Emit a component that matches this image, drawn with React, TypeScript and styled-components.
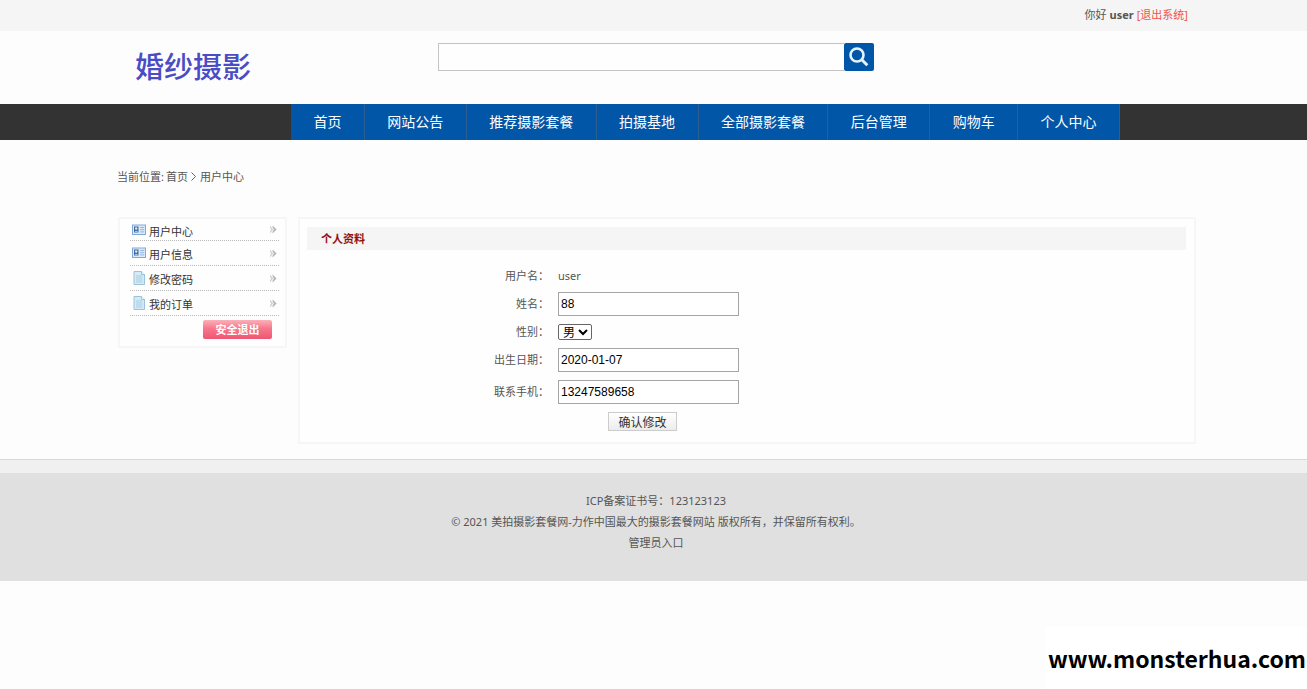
import React from "react";
import styled, { createGlobalStyle } from "styled-components";

const GlobalStyle = createGlobalStyle`
  * { box-sizing: border-box; }
  body {
    margin: 0;
    background: #fdfdfd;
    color: #555;
    font: 11px/21px "Noto Sans", "Noto Sans CJK SC", sans-serif;
  }
  a { color: inherit; text-decoration: none; }
  ul { list-style: none; margin: 0; padding: 0; }
`;

const Page = styled.div`
  display: flex;
  flex-direction: column;
  min-height: 100vh;
`;

const TopBar = styled.div`
  display: flex;
  justify-content: flex-end;
  gap: 3px;
  height: 31px;
  padding: 0 119px 0 0;
  line-height: 30px;
  background: #f5f5f5;
`;

const LogoutLink = styled.a`
  color: #f0524f;
`;

const Header = styled.header`
  display: flex;
  align-items: flex-start;
  height: 73px;
  padding: 12px 111px 0 135px;
`;

const Logo = styled.a`
  flex: 0 0 303px;
  color: #4a4cc6;
  font: 500 29px/44px "Noto Sans CJK SC", sans-serif;
`;

const SearchForm = styled.form`
  display: flex;
  flex: 0 1 436px;
`;

const SearchInput = styled.input`
  flex: 1;
  min-width: 0;
  height: 28px;
  padding: 0 6px;
  border: 1px solid #c4c4c4;
  border-right: 0;
  background: #fefefe;
  font: 12px "Liberation Sans", sans-serif;
`;

const SearchButton = styled.button`
  display: flex;
  align-items: center;
  justify-content: center;
  width: 30px;
  height: 28px;
  padding: 0;
  border: 0;
  border-radius: 2px;
  background: #0256a8;
`;

const Nav = styled.nav`
  padding: 0 187px 0 291px;
  background: #333;
`;

const NavList = styled.ul`
  display: flex;
  max-width: 829px;
`;

const NavItem = styled.li`
  flex: 1 0 auto;
  border-right: 1px solid #2c5f90;
  background: #0256a8;
`;

const NavLink = styled.a`
  display: block;
  height: 36px;
  padding: 0 21px;
  color: #fff;
  text-align: center;
  font: 14px/34px "Noto Sans CJK SC", sans-serif;
`;

const Breadcrumb = styled.div`
  display: flex;
  align-items: center;
  gap: 2px;
  padding: 26px 111px 30px 117px;
`;

const Columns = styled.div`
  display: flex;
  align-items: flex-start;
  gap: 11px;
  padding: 0 111px 15px 118px;
`;

const Sidebar = styled.aside`
  flex: 0 0 169px;
  padding: 0 6px 7px 10px;
  border: 2px solid #f6f6f6;
  background: #fefefe;
`;

const MenuItem = styled.li`
  height: 25px;
  border-bottom: 1px dotted #bbb;
  &:first-child { height: 22px; }
`;

const MenuLink = styled.a`
  display: flex;
  align-items: center;
  gap: 3px;
  height: 100%;
  padding: 0 1px 0 2px;
  color: #333;
`;

const MenuLabel = styled.span`
  flex: 1;
  padding-top: 3px;
`;

const ExitButton = styled.button`
  display: block;
  width: 69px;
  height: 19px;
  margin: 4px 7px 0 auto;
  padding: 0;
  border: 0;
  border-radius: 2px;
  background: linear-gradient(#fbb0ba, #f7768c 45%, #ee5672);
  color: #fff;
  font: bold 11px/19px "Noto Sans CJK SC", sans-serif;
`;

const Panel = styled.main`
  flex: 1;
  padding: 8px 8px 11px 7px;
  border: 2px solid #f6f6f6;
  background: #fefefe;
`;

const PanelTitle = styled.h1`
  height: 23px;
  margin: 0 0 12px;
  padding: 0 14px;
  background: #f5f5f5;
  color: #901010;
  font: bold 11px/22px "Noto Sans CJK SC", sans-serif;
`;

const Row = styled.div<{ $tall?: boolean }>`
  display: grid;
  grid-template-columns: 242px 181px;
  gap: 9px;
  align-items: center;
  height: ${(p) => (p.$tall ? 36 : 28)}px;
`;

const FieldText = styled.span`
  padding-bottom: 2px;
`;

const FieldLabel = styled.label`
  padding-bottom: 2px;
  text-align: right;
`;

const TextInput = styled.input`
  width: 100%;
  height: 24px;
  padding: 0 2px;
  border: 1px solid #a5a5a5;
  background: #fff;
  color: #000;
  font: 12px "Liberation Sans", sans-serif;
`;

const Select = styled.select`
  width: 34px;
  height: 16px;
  padding: 0;
  border: 1px solid #666;
  border-radius: 2px;
  background: #fff;
  color: #000;
  font: 12px/14px "Liberation Sans", "Noto Sans CJK SC", sans-serif;
`;

const SubmitButton = styled.button`
  display: block;
  width: 69px;
  height: 19px;
  margin: 2px 0 0 301px;
  padding: 0;
  border: 1px solid #ccc;
  background: linear-gradient(#fff, #ececec);
  color: #333;
  font: 12px/17px "Noto Sans CJK SC", sans-serif;
`;

const Footer = styled.footer`
  height: 122px;
  padding: 17px 0 0 5px;
  border-top: 1px solid #d8d8d8;
  background: linear-gradient(#f0f0f0 13px, #e0e0e0 13px);
  text-align: center;
`;

const FooterLine = styled.p`
  margin: 0;
  &:first-child { margin-top: 13px; }
`;

const Watermark = styled.div`
  align-self: flex-end;
  margin-top: auto;
  padding: 0 1px 0 3px;
  background: #fff;
  color: #000;
  font: bold 23px/62px "Noto Sans CJK SC", sans-serif;
`;

const navItems = ["首页", "网站公告", "推荐摄影套餐", "拍摄基地", "全部摄影套餐", "后台管理", "购物车", "个人中心"];

const menuItems = [
  { label: "用户中心", icon: "card" },
  { label: "用户信息", icon: "card" },
  { label: "修改密码", icon: "page" },
  { label: "我的订单", icon: "page" },
];

const SearchIcon = () => (
  <svg width="22" height="22" viewBox="0 0 22 22" fill="none" stroke="#e4f4ff">
    <circle cx="9" cy="9" r="6.5" strokeWidth="2.6" />
    <path d="M13.8 13.8 19.3 19.3" strokeWidth="3" />
  </svg>
);

const CardIcon = () => (
  <svg width="14" height="12" viewBox="0 0 14 12">
    <rect x=".5" y="1" width="13" height="9.5" fill="#dcebf9" stroke="#7fa9d8" />
    <rect x="2" y="2.5" width="4.5" height="6" fill="#3b659c" />
    <circle cx="4.2" cy="4.5" r="1.3" fill="#f6dfc4" />
    <path d="M2.5 8.3c.3-2 3.2-2 3.6 0z" fill="#9ec9f0" />
    <path d="M8.2 3.5h4M8.2 5.7h4M8.2 7.9h4" stroke="#8fb5de" />
  </svg>
);

const PageIcon = () => (
  <svg width="14" height="14" viewBox="0 0 14 14">
    <path d="M2 .5h7.5L12.5 3.5v10H2z" fill="#d4ebf7" stroke="#9cc2d8" />
    <path d="M9.5.5v3h3" fill="#fff" stroke="#9cc2d8" />
    <path d="M4 5h6.5M4 7h6.5M4 9h6.5M4 11h6.5" stroke="#a6cfe4" />
  </svg>
);

const ArrowIcon = () => (
  <svg width="9" height="9" viewBox="0 0 9 9">
    <path d="M1 .5 4.2 4.500 1 8.500V6.500L2.200 4.500 1 2.500z" fill="#d0d0d0" />
    <path d="M3.600.5 7.600 4.500 3.600 8.500V6.500L5 4.500 3.600 2.500z" fill="#b5b5b5" />
  </svg>
);

const CrumbIcon = () => (
  <svg width="8" height="9" viewBox="0 0 8 9" fill="none" stroke="#666">
    <path d="M1.5.5 5.5 4.5 1.5 8.5" />
  </svg>
);

export default function App() {
  return (
    <Page>
      <GlobalStyle />
      <TopBar>
        <span>你好</span>
        <b>user</b>
        <LogoutLink href="#logout">[退出系统]</LogoutLink>
      </TopBar>
      <Header>
        <Logo href="#home">婚纱摄影</Logo>
        <SearchForm onSubmit={(e) => e.preventDefault()}>
          <SearchInput type="text" aria-label="搜索" />
          <SearchButton type="submit" aria-label="搜索">
            <SearchIcon />
          </SearchButton>
        </SearchForm>
      </Header>
      <Nav>
        <NavList>
          {navItems.map((name) => (
            <NavItem key={name}>
              <NavLink href="#nav">{name}</NavLink>
            </NavItem>
          ))}
        </NavList>
      </Nav>
      <Breadcrumb>
        <span>当前位置:</span>
        <a href="#home">首页</a>
        <CrumbIcon />
        <span>用户中心</span>
      </Breadcrumb>
      <Columns>
        <Sidebar>
          <ul>
            {menuItems.map(({ label, icon }) => (
              <MenuItem key={label}>
                <MenuLink href="#menu">
                  {icon === "card" ? <CardIcon /> : <PageIcon />}
                  <MenuLabel>{label}</MenuLabel>
                  <ArrowIcon />
                </MenuLink>
              </MenuItem>
            ))}
          </ul>
          <ExitButton type="button">安全退出</ExitButton>
        </Sidebar>
        <Panel>
          <PanelTitle>个人资料</PanelTitle>
          <form onSubmit={(e) => e.preventDefault()}>
            <Row>
              <FieldLabel as="span">用户名：</FieldLabel>
              <FieldText>user</FieldText>
            </Row>
            <Row>
              <FieldLabel htmlFor="name">姓名：</FieldLabel>
              <TextInput id="name" defaultValue="88" />
            </Row>
            <Row>
              <FieldLabel htmlFor="gender">性别：</FieldLabel>
              <Select id="gender" defaultValue="男">
                <option>男</option>
                <option>女</option>
              </Select>
            </Row>
            <Row>
              <FieldLabel htmlFor="birthday">出生日期：</FieldLabel>
              <TextInput id="birthday" defaultValue="2020-01-07" />
            </Row>
            <Row $tall>
              <FieldLabel htmlFor="phone">联系手机：</FieldLabel>
              <TextInput id="phone" type="tel" defaultValue="13247589658" />
            </Row>
            <SubmitButton type="submit">确认修改</SubmitButton>
          </form>
        </Panel>
      </Columns>
      <Footer>
        <FooterLine>ICP备案证书号：123123123</FooterLine>
        <FooterLine>© 2021 美拍摄影套餐网-力作中国最大的摄影套餐网站 版权所有，并保留所有权利。</FooterLine>
        <FooterLine>
          <a href="#admin">管理员入口</a>
        </FooterLine>
      </Footer>
      <Watermark>www.monsterhua.com</Watermark>
    </Page>
  );
}
